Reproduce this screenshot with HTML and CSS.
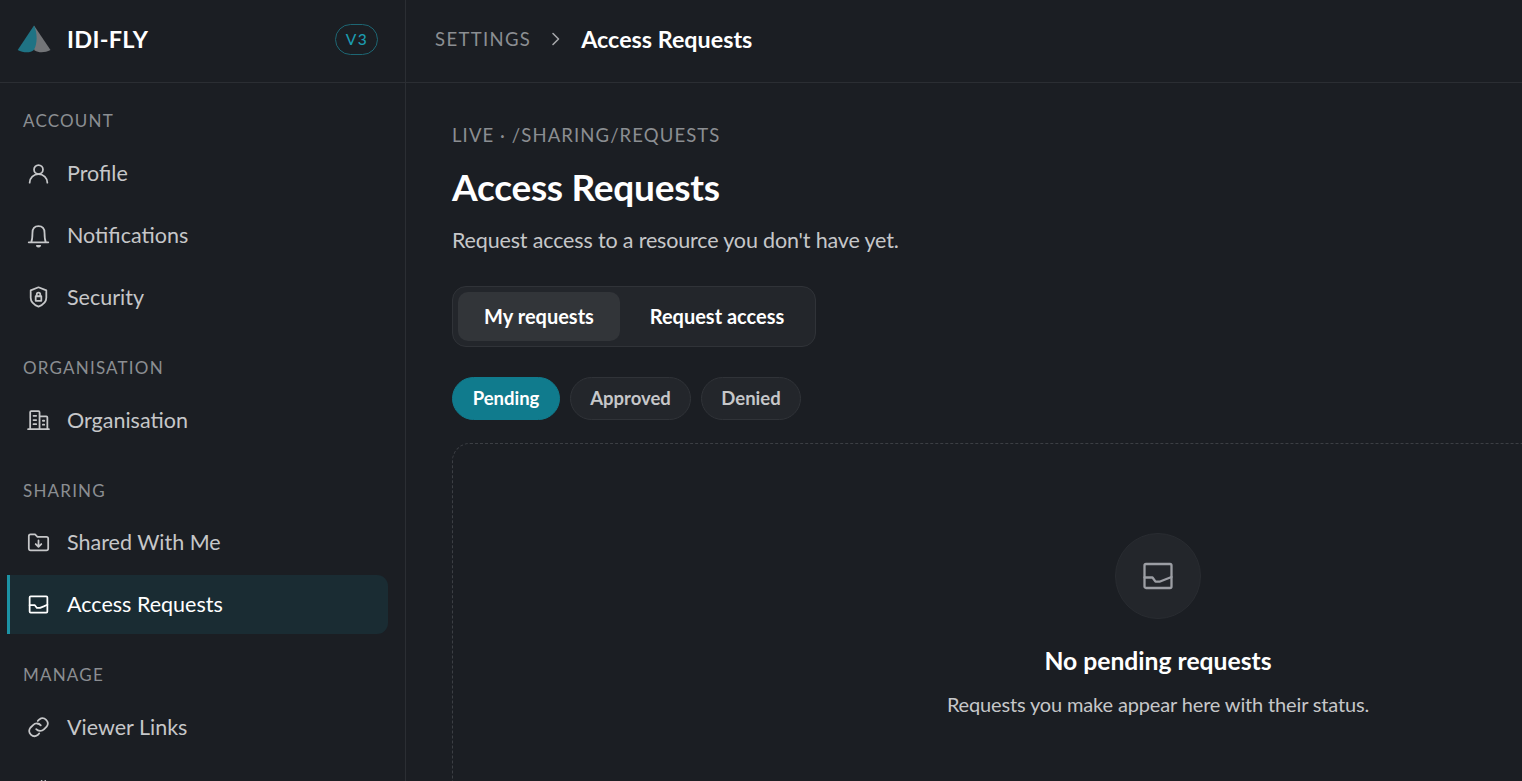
FILE: index.html
```html
<!DOCTYPE html>
<html lang="en">
<head>
  <meta charset="UTF-8">
  <meta name="viewport" content="width=device-width, initial-scale=1.0">
  <title>Access Requests</title>
  <link rel="stylesheet" href="styles.css">
</head>
<body>
  <aside class="sidebar">
    <div class="brand">
      <svg class="logo" viewBox="0 0 34 28">
        <path fill="#737578" d="M17 .5 33.500 25C28 27.800 22 28 17.600 25.500L15.500 20Z"/>
        <path fill="#1f7384" d="M17 .5C20.500 8 20.500 19 16.800 25 13.500 28.300 6 27.900.7 25Z"/>
      </svg>
      <span class="brand-name">IDI-FLY</span>
      <span class="version">V3</span>
    </div>
    <nav class="nav">
      <h3 class="nav-label">ACCOUNT</h3>
      <ul class="nav-list">
        <li class="nav-item">
          <svg class="icon" viewBox="0 0 24 24"><circle cx="12" cy="8.200" r="4.300"/><path d="M3.500 20.800a8.500 8.300 0 0 1 17 0"/></svg>
          Profile
        </li>
        <li class="nav-item">
          <svg class="icon" viewBox="0 0 24 24"><path d="M2.600 18.500h18.800M5 18.500c1-2.500 1.200-5 1.200-9C6.200 5.500 8.500 3 12 3s5.800 2.500 5.800 6.500c0 4 .2 6.500 1.200 9M10.400 21.900c.8 1.100 2.400 1.100 3.200 0z"/></svg>
          Notifications
        </li>
        <li class="nav-item">
          <svg class="icon" viewBox="0 0 24 24"><path d="M12 2.200l7.500 3v7c0 4-2.800 6.700-7.500 8.500-4.700-1.800-7.500-4.500-7.500-8.500v-7z"/><path d="M9.300 10.800h5.400v4.400H9.300zM10.300 10.800V9a1.700 1.700 0 0 1 3.400 0v1.800"/></svg>
          Security
        </li>
      </ul>
      <h3 class="nav-label">ORGANISATION</h3>
      <ul class="nav-list">
        <li class="nav-item">
          <svg class="icon" viewBox="0 0 24 24"><path d="M2 21.300h20M4 21.300V5q0-1 1-1h7q1 0 1 1v16.300M13 9h6.500q1 0 1 1v11.300M7.200 8.500h2.600M7.200 12.500h2.600M7.200 16.500h2.600M16.200 13.200h1.300M16.200 17h1.300"/></svg>
          Organisation
        </li>
      </ul>
      <h3 class="nav-label">SHARING</h3>
      <ul class="nav-list">
        <li class="nav-item">
          <svg class="icon" viewBox="0 0 24 24"><path d="M2.700 6q0-1.700 1.700-1.700h4.300L11 6.500h8.600q1.700 0 1.700 1.700v9.600q0 1.700-1.700 1.700H4.400q-1.700 0-1.700-1.700zM12 10v6M9.300 13.500l2.700 2.700 2.700-2.700"/></svg>
          Shared With Me
        </li>
        <li class="nav-item active">
          <svg class="icon" viewBox="0 0 24 24"><rect x="3.500" y="4.200" width="17" height="15.500" rx="1"/><path d="M3.500 12.700h5l2 2.600h3l3.500-1.500 3.500-1.600"/></svg>
          Access Requests
        </li>
      </ul>
      <h3 class="nav-label">MANAGE</h3>
      <ul class="nav-list">
        <li class="nav-item">
          <svg class="icon" viewBox="0 0 24 24"><path d="M9.800 14.500a5 5 0 0 0 7.400.3l2.600-2.600a5 5 0 0 0-7-7L11.300 6.700"/><path d="M14.200 10.900a5 5 0 0 0-7.400-.3l-2.600 2.600a5 5 0 0 0 7 7l1.500-1.500"/></svg>
          Viewer Links
        </li>
        <li class="nav-item">
          <svg class="icon" viewBox="0 0 24 24"><path d="M15 4.800v4M18.500 4.800v4M12 8.800h9v4a4 4 0 0 1-9 0z"/></svg>
        </li>
      </ul>
    </nav>
  </aside>
  <div class="page">
    <header class="topbar">
      <span class="crumb">SETTINGS</span>
      <svg class="chevron" viewBox="0 0 10 14"><path d="M2 1.500 7.500 7 2 12.500"/></svg>
      <span class="crumb-current">Access Requests</span>
    </header>
    <main class="content">
      <div class="eyebrow">LIVE · /SHARING/REQUESTS</div>
      <h1 class="title">Access Requests</h1>
      <p class="subtitle">Request access to a resource you don't have yet.</p>
      <div class="tabs">
        <button class="tab tab-mine active">My requests</button>
        <button class="tab tab-request">Request access</button>
      </div>
      <div class="filters">
        <button class="filter filter-pending active">Pending</button>
        <button class="filter filter-approved">Approved</button>
        <button class="filter filter-denied">Denied</button>
      </div>
      <section class="empty">
        <div class="empty-icon">
          <svg viewBox="0 0 32 28"><rect x="2.500" y="2" width="27" height="24" rx="1.500"/><path d="M2.500 15.500h8l3 4.200h4l5-2 7-2.700"/></svg>
        </div>
        <h2 class="empty-title">No pending requests</h2>
        <p class="empty-text">Requests you make appear here with their status.</p>
      </section>
    </main>
  </div>
</body>
</html>
```
FILE: styles.css
```css
* {
  box-sizing: border-box;
}
body {
  margin: 0;
  display: flex;
  height: 100vh;
  overflow: hidden;
  background-color: #1b1e23;
  color: #fff;
  font-family: Lato, "Open Sans", sans-serif;
}
h1, h2, h3, p, ul {
  margin: 0;
  padding: 0;
}
button {
  font-family: inherit;
  padding: 0;
  cursor: pointer;
}
svg {
  display: block;
  flex-shrink: 0;
  fill: none;
  stroke-linecap: round;
  stroke-linejoin: round;
}

/* Sidebar */
.sidebar {
  flex: 0 0 406px;
  border-right: 1px solid #2b2e33;
  overflow: hidden;
}
.brand {
  display: flex;
  align-items: center;
  height: 83px;
  padding: 0 27px 4px 17px;
  border-bottom: 1px solid #2b2e33;
}
.logo {
  width: 34px;
  height: 28px;
  margin-right: 16px;
}
.brand-name {
  font-size: 23.5px;
  font-weight: 700;
  letter-spacing: 0.3px;
}
.version {
  margin-left: auto;
  width: 43px;
  height: 31px;
  padding-left: 1px;
  border: 1px solid #1d6673;
  border-radius: 16px;
  color: #1c9cb0;
  font-size: 15.5px;
  font-weight: 500;
  letter-spacing: 1.4px;
  line-height: 29px;
  text-align: center;
}
.nav {
  padding: 0 17px 0 7px;
}
.nav-label {
  height: 63.5px;
  padding: 30px 0 0 16px;
  color: #8b8e92;
  font-size: 17px;
  font-weight: 400;
  letter-spacing: 1.2px;
  line-height: 21px;
}
.nav-label:first-child {
  height: 61px;
  padding-top: 27px;
}
.nav-list {
  display: flex;
  flex-direction: column;
  gap: 3px;
  list-style: none;
}
.nav-item {
  display: flex;
  align-items: center;
  gap: 16px;
  height: 59px;
  padding: 0 0 1px 16px;
  border-left: 3px solid transparent;
  color: #c6c7c9;
  font-size: 21.5px;
}
.nav-item.active {
  border-left-color: #1c93a5;
  border-radius: 0 11px 11px 0;
  background-color: #1a2c33;
  color: #fff;
}
.icon {
  width: 25px;
  height: 25px;
  stroke: currentColor;
  stroke-width: 1.7;
}

/* The content column is wider than the window */
.page {
  flex: 0 0 1504px;
}
.topbar {
  display: flex;
  align-items: center;
  height: 83px;
  padding: 0 29px 4px;
  border-bottom: 1px solid #2b2e33;
}
.crumb, .eyebrow {
  color: #8b8e92;
  font-size: 18.5px;
}
.crumb {
  letter-spacing: 1.35px;
}
.chevron {
  width: 10px;
  height: 14px;
  margin: 0 20px 0 20px;
  stroke: #a5a7aa;
  stroke-width: 1.6;
}
.crumb-current {
  font-size: 23.3px;
  font-weight: 700;
}
.content {
  padding: 41px 46px;
}
.eyebrow {
  letter-spacing: 1.1px;
  line-height: 23px;
}
.title {
  margin-top: 17px;
  font-size: 37px;
  font-weight: 700;
  letter-spacing: -0.27px;
  line-height: 46px;
}
.subtitle {
  margin-top: 14px;
  color: #c6c7c9;
  font-size: 21.5px;
  letter-spacing: -0.16px;
  line-height: 32px;
}
.tabs {
  display: inline-flex;
  margin-top: 30px;
  padding: 5px;
  border: 1px solid #303338;
  border-radius: 14px;
  background-color: #23262b;
  vertical-align: top;
}
.tab {
  height: 49px;
  padding-bottom: 2px;
  border: none;
  border-radius: 10px;
  background: none;
  color: #fff;
  font-size: 20px;
  font-weight: 700;
}
.tab.active {
  background-color: #323539;
}
.tab-mine {
  width: 162px;
}
.tab-request {
  width: 190px;
  padding-left: 4px;
}
.filters {
  display: flex;
  gap: 10px;
  margin-top: 30px;
}
.filter {
  height: 43px;
  padding-bottom: 2px;
  border: 1px solid #303338;
  border-radius: 22px;
  background-color: #23262b;
  color: #c6c7c9;
  font-size: 18.5px;
  font-weight: 700;
}
.filter.active {
  border-color: #107b8d;
  background-color: #107b8d;
  color: #fff;
}
.filter-pending {
  width: 108px;
}
.filter-approved {
  width: 121px;
}
.filter-denied {
  width: 100px;
}
.empty {
  display: flex;
  flex-direction: column;
  align-items: center;
  height: 420px;
  margin-top: 23px;
  padding-top: 89px;
  border: 1px dashed #3c3f44;
  border-radius: 18px;
}
.empty-icon {
  display: flex;
  align-items: center;
  justify-content: center;
  width: 86px;
  height: 86px;
  border: 1px solid #292c31;
  border-radius: 50%;
  background-color: #23262b;
}
.empty-icon svg {
  width: 32px;
  height: 28px;
  stroke: #9c9ea4;
  stroke-width: 2.3;
}
.empty-title {
  margin-top: 26px;
  font-size: 24.7px;
  font-weight: 700;
  line-height: 32px;
}
.empty-text {
  margin-top: 12px;
  color: #c6c7c9;
  font-size: 20px;
  letter-spacing: -0.15px;
  line-height: 30px;
}
```
